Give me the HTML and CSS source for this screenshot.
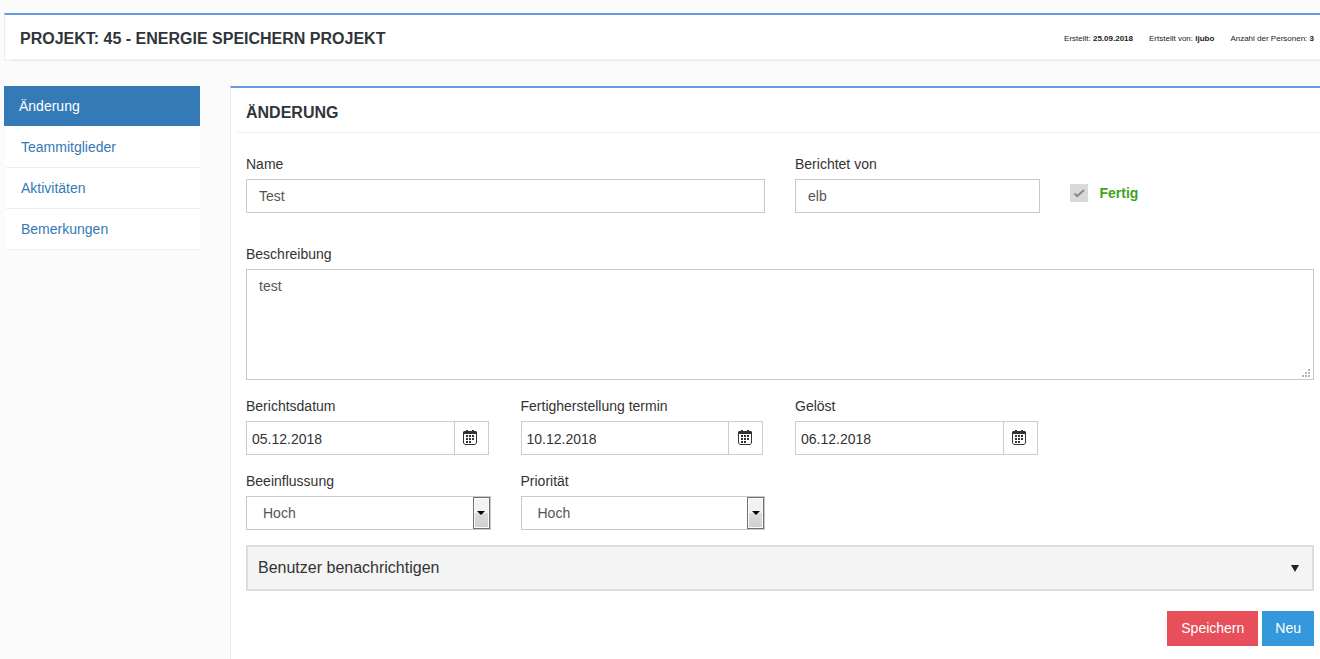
FILE: index.html
```html
<!DOCTYPE html>
<html lang="de">
<head>
<meta charset="utf-8">
<title>Projekt 45 - Änderung</title>
<link rel="stylesheet" href="styles.css">
</head>
<body>
<svg class="sprite" aria-hidden="true">
  <symbol id="calendar" viewBox="0 0 14 15">
    <path fill="#333" fill-rule="evenodd" d="M1 1h2V0h2v1h4V0h2v1h2l1 1v11l-2 2H2l-2-2V2zM1 4v9l1 1h10l1-1V4z"/>
    <path fill="#333" d="M3 5h2v2H3zM6 5h2v2H6zM9 5h2v2H9zM3 8h2v2H3zM6 8h2v2H6zM9 8h2v2H9zM3 11h2v2H3zM6 11h2v2H6z"/>
  </symbol>
</svg>
<header class="project">
  <div class="project-inner">
    <h1 class="title">PROJEKT: 45 - ENERGIE SPEICHERN PROJEKT</h1>
    <div class="meta">
      <span>Erstellt: <b>25.09.2018</b></span>
      <span>Ertstellt von: <b>ljubo</b></span>
      <span>Anzahl der Personen: <b>3</b></span>
    </div>
  </div>
</header>
<div class="layout">
  <nav class="tabs">
    <a class="tab active" href="#aenderung">Änderung</a>
    <a class="tab" href="#team">Teammitglieder</a>
    <a class="tab" href="#aktivitaeten">Aktivitäten</a>
    <a class="tab" href="#bemerkungen">Bemerkungen</a>
  </nav>
  <main class="panel" id="aenderung">
    <h2 class="title panel-title">ÄNDERUNG</h2>
    <form class="form">
      <div class="row first">
        <div class="field wide">
          <label for="name">Name</label>
          <input class="control" id="name" type="text" value="Test">
        </div>
        <div class="field">
          <label for="reporter">Berichtet von</label>
          <input class="control" id="reporter" type="text" value="elb">
        </div>
        <label class="done"><input class="check" type="checkbox" checked disabled>Fertig</label>
      </div>
      <div class="field">
        <label for="description">Beschreibung</label>
        <div class="area-wrap">
          <textarea class="control area" id="description">test</textarea>
          <svg class="grip" viewBox="0 0 8 8" width="8" height="8" aria-hidden="true"><path fill="#b8b8b8" d="M6 0h2v2H6zM3 3h2v2H3zM6 3h2v2H6zM0 6h2v2H0zM3 6h2v2H3zM6 6h2v2H6z"/></svg>
        </div>
      </div>
      <div class="row">
        <div class="field">
          <label for="reported">Berichtsdatum</label>
          <div class="date"><input id="reported" type="text" value="05.12.2018"><button type="button" aria-label="Kalender"><svg width="14" height="15"><use href="#calendar"/></svg></button></div>
        </div>
        <div class="field">
          <label for="due">Fertigherstellung termin</label>
          <div class="date"><input id="due" type="text" value="10.12.2018"><button type="button" aria-label="Kalender"><svg width="14" height="15"><use href="#calendar"/></svg></button></div>
        </div>
        <div class="field">
          <label for="solved">Gelöst</label>
          <div class="date"><input id="solved" type="text" value="06.12.2018"><button type="button" aria-label="Kalender"><svg width="14" height="15"><use href="#calendar"/></svg></button></div>
        </div>
      </div>
      <div class="row">
        <div class="field">
          <label for="impact">Beeinflussung</label>
          <div class="select"><select class="control" id="impact"><option>Hoch</option></select><span class="arrow"><svg width="8" height="4"><path d="M0 0h8L4 4z"/></svg></span></div>
        </div>
        <div class="field">
          <label for="priority">Priorität</label>
          <div class="select"><select class="control" id="priority"><option>Hoch</option></select><span class="arrow"><svg width="8" height="4"><path d="M0 0h8L4 4z"/></svg></span></div>
        </div>
      </div>
      <button class="notify" type="button"><span>Benutzer benachrichtigen</span><svg width="8" height="7"><path fill="#222" d="M0 0h8L4 7z"/></svg></button>
      <div class="actions">
        <button class="btn save" type="submit">Speichern</button>
        <button class="btn new" type="button">Neu</button>
      </div>
    </form>
  </main>
</div>
</body>
</html>
```
FILE: styles.css
```css
* { box-sizing: border-box; }
body {
  margin: 0;
  padding: 13px 0 0 4px;
  min-height: 100vh;
  display: flex;
  flex-direction: column;
  background: #fbfbfb;
  color: #333;
  font: 14px/20px "Liberation Sans", Arial, sans-serif;
}
input, select, textarea, button { font: inherit; color: inherit; margin: 0; border-radius: 0; }
button { cursor: pointer; }
.sprite { position: absolute; width: 0; height: 0; }
.project {
  border: 1px solid #e7ecf1;
  border-top: 2px solid #659be0;
  border-right: 0;
  background: #fff;
  padding-left: 5px;
}
.project-inner {
  display: flex;
  align-items: center;
  justify-content: space-between;
  height: 45px;
  padding: 4px 6px 0 10px;
  border-bottom: 1px solid #eef1f5;
}
.title { margin: 0; font-size: 16px; line-height: 20px; font-weight: bold; color: #2f353b; }
.meta { display: flex; gap: 16px; font-size: 8px; line-height: 10px; color: #222; }
.layout { display: flex; flex: 1; gap: 30px; margin-top: 25px; }
.tabs { width: 196px; flex: none; }
.tab {
  display: block;
  margin-left: 2px;
  padding: 10px 15px;
  border-bottom: 1px solid #eee;
  background: #fff;
  color: #337ab7;
  text-decoration: none;
}
.tab.active { margin-left: 0; border-color: #fbfbfb; background: #337ab7; color: #fff; }
.panel {
  flex: 1;
  min-width: 0;
  border-top: 2px solid #659be0;
  border-left: 1px solid #e7ecf1;
  background: #fff;
}
.panel-title { margin-left: 5px; padding: 15px 10px 9px; border-bottom: 1px solid #eef1f5; }
.form { padding: 21px 6px 13px 15px; }
.row { display: grid; grid-template-columns: repeat(4, minmax(0, 1fr)); column-gap: 30px; margin-top: 16px; }
.first { margin: 0 0 31px; }
.wide { grid-column: span 2; }
.field label { display: block; margin-bottom: 5px; }
.control {
  display: block;
  width: 100%;
  height: 34px;
  padding: 6px 12px;
  border: 1px solid #c2cad8;
  background: #fff;
  color: #555;
}
.done { display: flex; align-items: center; align-self: end; height: 40px; gap: 12px; color: #3fa31f; font-weight: bold; }
.check { appearance: none; width: 18px; height: 18px; background: #d9d9d9 url("data:image/svg+xml,%3Csvg xmlns='http://www.w3.org/2000/svg' viewBox='0 0 18 18'%3E%3Cpath d='M4.5 9.5l2.7 2.6L14 6' fill='none' stroke='%23888' stroke-width='2'/%3E%3C/svg%3E"); }
.area-wrap { position: relative; }
.area { height: 111px; resize: none; }
.grip { position: absolute; right: 4px; bottom: 3px; }
.date { display: flex; height: 34px; margin-right: 2px; border: 1px solid #ccc; background: #fff; }
.date input { flex: 1; min-width: 0; padding: 2px 5px 0; border: 0; font-size: 14px; color: #333; background: transparent; }
.date button {
  display: flex;
  align-items: center;
  justify-content: center;
  width: 34px;
  padding: 0 2px 1px 0;
  border: 0;
  border-left: 1px solid #ccc;
  background: #fff;
}
.select { position: relative; }
.select select { appearance: none; padding-left: 16px; }
.arrow {
  position: absolute;
  top: 1px;
  right: 1px;
  bottom: 1px;
  width: 17px;
  display: flex;
  align-items: center;
  justify-content: center;
  border: 1px solid #707070;
  box-shadow: inset 0 0 0 1px #fafafa;
  background: linear-gradient(#f2f2f2 50%, #dcdcdc 50%, #cfcfcf);
  pointer-events: none;
}
.notify {
  display: flex;
  align-items: center;
  justify-content: space-between;
  width: 100%;
  height: 46px;
  margin-top: 15px;
  padding: 0 13px 0 10px;
  border: 2px solid #ddd;
  background: #f4f4f4;
  font-size: 16px;
  text-align: left;
}
.actions { display: flex; justify-content: flex-end; gap: 4px; margin-top: 20px; }
.btn { height: 35px; padding: 0 13px 1px; border: 0; color: #fff; }
.save { padding: 0 14px 1px; background: #e7505a; }
.new { background: #3598dc; }
```
